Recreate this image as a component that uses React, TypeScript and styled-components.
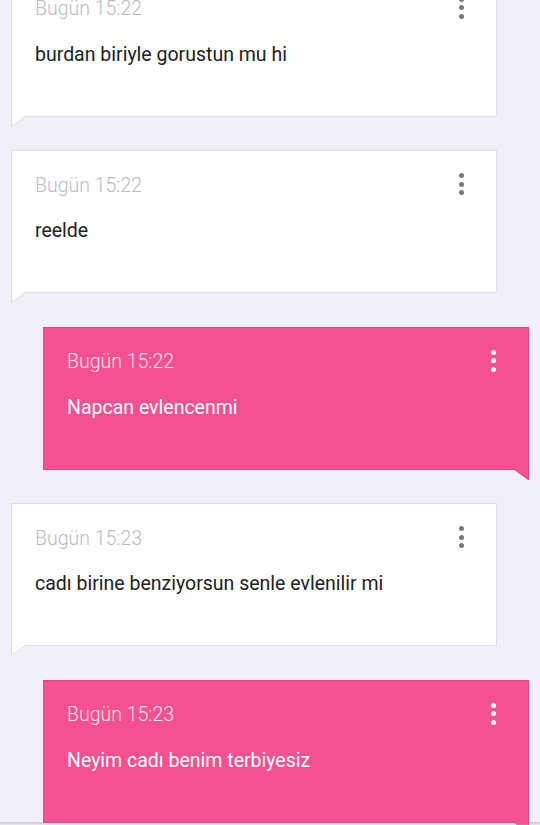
import styled, { createGlobalStyle } from "styled-components";

const GlobalStyle = createGlobalStyle`
  html, body {
    margin: 0;
    padding: 0;
    background: #f0f1f8;
    font-family: Roboto, "Noto Sans", "Liberation Sans", sans-serif;
  }
  #root {
    height: 825px;
    overflow: hidden;
  }
`;

type Msg = { time: string; text: string; mine: boolean };

const messages: Msg[] = [
  { time: "Bugün 15:22", text: "burdan biriyle gorustun mu hi", mine: false },
  { time: "Bugün 15:22", text: "reelde", mine: false },
  { time: "Bugün 15:22", text: "Napcan evlencenmi", mine: true },
  { time: "Bugün 15:23", text: "cadı birine benziyorsun senle evlenilir mi", mine: false },
  { time: "Bugün 15:23", text: "Neyim cadı benim terbiyesiz", mine: true },
];

const Page = styled.div`
  position: relative;
  height: 825px;
  overflow: hidden;
`;

const List = styled.div`
  display: flex;
  flex-direction: column;
  gap: 33.5px;
  margin-top: -26.5px;
`;

const Bubble = styled.div<{ $mine: boolean }>`
  position: relative;
  box-sizing: border-box;
  height: 143px;
  width: 486px;
  margin-left: ${(p) => (p.$mine ? "43px" : "11px")};
  padding: 0 23px;
  background: ${(p) => (p.$mine ? "#f55190" : "#ffffff")};
  border: 1px solid ${(p) => (p.$mine ? "#e0487f" : "#dfdfe6")};
  color: ${(p) => (p.$mine ? "#ffffff" : "#212121")};
`;

const Head = styled.div`
  display: flex;
  justify-content: space-between;
  align-items: center;
  height: 40px;
  margin-top: 14px;
`;

const Time = styled.span<{ $mine: boolean }>`
  font-size: 19.5px;
  font-weight: 300;
  color: ${(p) => (p.$mine ? "rgba(255,255,255,0.85)" : "#bcbcbf")};
`;

const Dots = styled.div<{ $mine: boolean }>`
  display: flex;
  flex-direction: column;
  gap: 3.5px;
  margin-right: 9px;
  margin-top: -2px;
  span {
    width: 5px;
    height: 5px;
    border-radius: 50%;
    background: ${(p) => (p.$mine ? "#ffffff" : "#7a7a7a")};
  }
`;

const Text = styled.p`
  margin: 6px 0 0;
  font-size: 19.5px;
  line-height: 40px;
`;

const Tail = styled.svg<{ $mine: boolean }>`
  position: absolute;
  bottom: -11px;
  ${(p) => (p.$mine ? "right: -1px;" : "left: -1px;")}
`;

const BottomShade = styled.div`
  position: absolute;
  left: 0;
  right: 0;
  bottom: 0;
  height: 3px;
  background: linear-gradient(to bottom, rgba(120, 120, 120, 0.35), rgba(200, 200, 200, 0.2));
`;

const MessageCard = ({ msg }: { msg: Msg }) => (
  <Bubble $mine={msg.mine}>
    <Head>
      <Time $mine={msg.mine}>{msg.time}</Time>
      <Dots $mine={msg.mine}>
        <span />
        <span />
        <span />
      </Dots>
    </Head>
    <Text>{msg.text}</Text>
    {msg.mine ? (
      <Tail $mine width="16" height="12" viewBox="0 0 16 12">
        <polygon points="0,0 16,0 16,12 15,12" fill="#f55190" />
        <polyline points="0.5,1 15.5,11.5 15.5,0" fill="none" stroke="#d9477e" strokeWidth="1" />
      </Tail>
    ) : (
      <Tail $mine={false} width="16" height="12" viewBox="0 0 16 12">
        <polygon points="0,0 16,0 1,12 0,12" fill="#ffffff" />
        <polyline points="0.5,0 0.5,11.5 15,1" fill="none" stroke="#dcdce3" strokeWidth="1" />
      </Tail>
    )}
  </Bubble>
);

export default function App() {
  return (
    <Page>
      <GlobalStyle />
      <List>
        {messages.map((m, i) => (
          <MessageCard key={i} msg={m} />
        ))}
      </List>
      <BottomShade />
    </Page>
  );
}
